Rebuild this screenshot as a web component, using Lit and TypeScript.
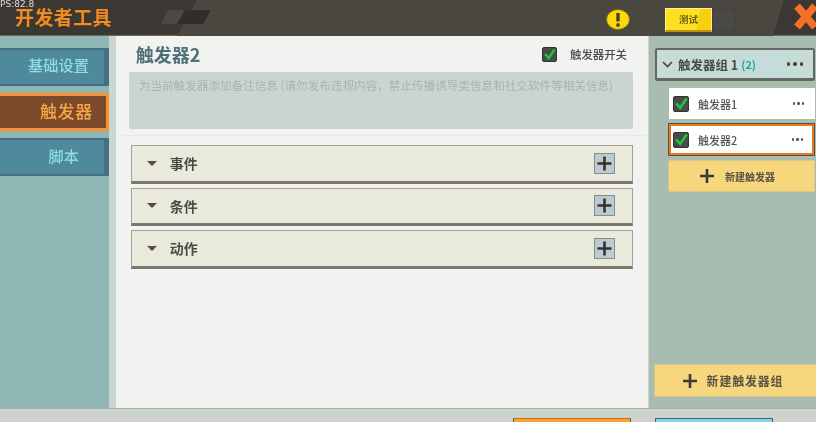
import { LitElement, html, css, svg } from "lit";
import { customElement } from "lit/decorators.js";

const tick = svg`<path d="M3.5 8.5 L7 12.5 L13.5 3" fill="none" stroke="#17c83a" stroke-width="3" stroke-linecap="square"/>`;

@customElement("app-root")
export class AppRoot extends LitElement {
  static styles = css`
    :host { display: block; width: 816px; height: 422px; overflow: hidden; font-family: "Noto Sans CJK SC", "Noto Sans", sans-serif; }
    .app { width: 816px; height: 422px; display: flex; flex-direction: column; background: #cbd3cc; filter: blur(0.5px); overflow: hidden; }
    .header { position: relative; flex: 0 0 36px; height: 36px; background: #3b3833; border-bottom: 1px solid #6d6b62; box-sizing: border-box; display: flex; align-items: center; }
    .deco { position: absolute; inset: 0; }
    .fps { position: absolute; left: 0; top: 0; font: 9px/9px "DejaVu Sans", sans-serif; color: #ddd; }
    .title { position: relative; margin-left: 15px; font-size: 19px; line-height: 20px; font-weight: 700; color: #f58a1e; letter-spacing: .4px; margin-top: -2px; }
    .head-right { position: relative; margin-left: auto; display: flex; align-items: center; height: 100%; }
    .warn { width: 24px; height: 21px; margin-right: 35px; margin-top: 4px; display: block; }
    .toggle { display: flex; width: 70px; height: 24px; margin-right: 81px; margin-top: 5px; }
    .test { width: 47px; box-sizing: border-box; background: linear-gradient(100deg, #fde021 0 70%, #f8cf0b 70%); border: 1px solid #fff0a0; border-bottom: 2px solid #b9930b; font-size: 9.5px; line-height: 21px; text-align: center; color: #6f5f10; font-weight: 700; }
    .off { width: 23px; background: #4a4946; border: 1px solid #43413d; box-sizing: border-box; margin: 1px 0; }
    .close { position: absolute; right: -1px; top: 3px; width: 23px; height: 27px; }
    .body { flex: 0 0 372px; display: flex; background: #cbd6d0; }
    .side { width: 109px; background: #8fb5b5; display: flex; flex-direction: column; gap: 7px; padding-top: 12px; box-sizing: border-box; }
    .tab { box-sizing: border-box; height: 38px; background: #4f8a9c; border: 2px solid #45707f; border-width: 2px 5px 2px 0; color: #8edde0; font-size: 15.2px; line-height: 29px; text-align: right; padding-right: 15px; font-weight: 500; }
    .tab.script { padding-right: 25px; line-height: 30px; }
    .tab.active { background: #7a4a2b; border: 3px solid #fb9232; border-left: 0; color: #f7a646; font-size: 17px; line-height: 30px; padding-right: 13px; letter-spacing: .6px; }
    .main { margin-left: 7px; width: 533px; background: #f2f2f0; display: flex; flex-direction: column; }
    .top { height: 100px; box-sizing: border-box; padding: 0 15px 0 13px; border-bottom: 1px solid #e2ebe7; }
    .title-row { height: 36px; display: flex; align-items: center; padding-left: 7px; padding-right: 6px; }
    .name { font-size: 18px; line-height: 36px; font-weight: 700; color: #4d6f75; margin-top: -1px; }
    .sw { margin-left: auto; display: flex; align-items: center; gap: 13px; font-size: 11.4px; color: #4a4a48; font-weight: 500; }
    .cb { display: block; box-sizing: border-box; background: #4a4a48; border: 1px solid #333; border-radius: 2px; }
    .note { height: 57px; background: #cbd5cf; border-radius: 2px; box-sizing: border-box; padding: 5px 10px; font-size: 11.6px; line-height: 16px; color: #a9b3ae; white-space: nowrap; }
    .rows { padding: 9px 15px 0 15px; display: flex; flex-direction: column; gap: 4px; }
    .row { box-sizing: border-box; height: 38.5px; background: #e9e9dc; border: 1px solid #a5a099; border-bottom: 3px solid #7c7870; display: flex; align-items: center; padding: 0 17px 0 15px; font-size: 14px; font-weight: 700; color: #4b4b48; }
    .row .tri { width: 0; height: 0; border: 5px solid transparent; border-top: 5px solid #544c42; border-bottom: 0; margin-right: 13px; }
    .row .plus { margin-left: auto; }
    .plusbtn { display: block; width: 21px; height: 21px; box-sizing: border-box; background: #bccbd3; border: 1px solid #8c8c86; }
    .right { margin-left: 1px; width: 167px; background: #a9bcb0; box-sizing: border-box; padding: 12px 0 0 6px; display: flex; flex-direction: column; }
    .group { box-sizing: border-box; height: 33px; width: 160px; background: #c5dcd8; border: 2px solid #66675f; border-bottom-width: 3px; border-radius: 2px; display: flex; align-items: center; padding: 0 10px 0 5px; font-size: 12.5px; font-weight: 700; color: #4a4a46; }
    .group .count { color: #22a596; font-size: 11px; margin-left: 3px; }
    .group .arr { margin-right: 5px; display: block; }
    .dots { margin-left: auto; display: flex; gap: 3px; }
    .dots i { display: block; border-radius: 50%; background: #444; }
    .dots.big i { width: 3.5px; height: 3.5px; }
    .dots.small { gap: 2px; }
    .dots.small i { width: 2.5px; height: 2.5px; background: #555; }
    .items { padding-left: 14px; margin-top: 7px; display: flex; flex-direction: column; gap: 4px; }
    .item { box-sizing: border-box; width: 146px; height: 31px; background: #fff; display: flex; align-items: center; padding: 0 11px 0 4px; gap: 9px; font-size: 11px; color: #555; font-weight: 500; }
    .item.sel { width: 147px; height: 33px; margin-left: -1px; border: 1px solid #55504a; box-shadow: inset 0 0 0 2px #e9771d; padding-left: 4px; gap: 9px; }
    .add { box-sizing: border-box; background: #f6d77e; border: 1px solid #d9c68a; display: flex; align-items: center; justify-content: center; font-weight: 700; color: #5a5344; }
    .add.one { width: 147px; height: 32px; margin-left: -1px; font-size: 10px; gap: 10px; padding-right: 9px; }
    .add.two { margin-top: auto; margin-bottom: 11px; margin-left: -1px; width: 162px; height: 33px; font-size: 12px; gap: 9px; letter-spacing: .8px; border-right: 0; padding-right: 6px; }
    .bottom { flex: 1; position: relative; border-top: 1px solid #a9b0a8; display: flex; padding: 9px 0 0 513px; gap: 24px; box-sizing: border-box; }
    .b { width: 118px; height: 20px; box-sizing: border-box; border: 1px solid #5b5a54; border-bottom: 0; }
    .b.o { background: #f9a23c; border-top-color: #c96f10; }
    .b.c { background: #7fd8f2; }
  `;

  private cb(size: number) {
    return html`<svg class="cb" width=${size} height=${size} viewBox="0 0 16 16">${tick}</svg>`;
  }
  private plus(size: number) {
    return html`<svg width=${size} height=${size} viewBox="0 0 16 16"><path d="M8 1V15M1 8H15" stroke="#3a3a36" stroke-width="2.6"/></svg>`;
  }
  private row(t: string) {
    return html`<div class="row"><span class="tri"></span><span>${t}</span>
      <span class="plus plusbtn"><svg width="19" height="19" viewBox="0 0 19 19"><path d="M9.5 2.5V16.5M2.5 9.5H16.5" stroke="#33332f" stroke-width="2.6"/></svg></span></div>`;
  }
  private dots(cls: string) {
    return html`<span class="dots ${cls}"><i></i><i></i><i></i></span>`;
  }

  render() {
    return html`<div class="app">
      <div class="header">
        <svg class="deco" width="816" height="36" viewBox="0 0 816 36">
          <polygon points="177,36 197,0 784,0 773,36" fill="#4a4640"/>
          <polygon points="168,10 185,10 177,24 161,24" fill="#4d4942"/>
          <polygon points="185,10 211,10 203,24 177,24" fill="#312e29"/>
        </svg>
        <span class="fps">PS:82.8</span>
        <span class="title">开发者工具</span>
        <div class="head-right">
          <svg class="warn" viewBox="0 0 24 21"><ellipse cx="12" cy="10.5" rx="11.5" ry="10" fill="#fcd80f" stroke="#7f6f10" stroke-width="1"/><path d="M12 4V12.5" stroke="#4a4232" stroke-width="3.4"/><circle cx="12" cy="16" r="1.9" fill="#4a4232"/></svg>
          <div class="toggle"><span class="test">测试</span><span class="off"></span></div>
          <svg class="close" viewBox="0 0 23 27"><path d="M3 3 L21 24 M21 3 L3 24" stroke="#f4702a" stroke-width="7.5"/></svg>
        </div>
      </div>
      <div class="body">
        <div class="side">
          <div class="tab">基础设置</div>
          <div class="tab active">触发器</div>
          <div class="tab script">脚本</div>
        </div>
        <div class="main">
          <div class="top">
            <div class="title-row">
              <span class="name">触发器2</span>
              <span class="sw">${this.cb(15)}<span>触发器开关</span></span>
            </div>
            <div class="note">为当前触发器添加备注信息 (请勿发布违规内容，禁止传播诱导类信息和社交软件等相关信息)</div>
          </div>
          <div class="rows">${this.row("事件")}${this.row("条件")}${this.row("动作")}</div>
        </div>
        <div class="right">
          <div class="group">
            <svg class="arr" width="11" height="7" viewBox="0 0 11 7"><path d="M1 1 L5.5 5.5 L10 1" fill="none" stroke="#444" stroke-width="1.6"/></svg>
            <span>触发器组 1</span><span class="count">(2)</span>${this.dots("big")}
          </div>
          <div class="items">
            <div class="item">${this.cb(16)}<span>触发器1</span>${this.dots("small")}</div>
            <div class="item sel">${this.cb(16)}<span>触发器2</span>${this.dots("small")}</div>
            <div class="add one">${this.plus(16)}<span>新建触发器</span></div>
          </div>
          <div class="add two">${this.plus(16)}<span>新建触发器组</span></div>
        </div>
      </div>
      <div class="bottom"><span class="b o"></span><span class="b c"></span></div>
    </div>`;
  }
}
